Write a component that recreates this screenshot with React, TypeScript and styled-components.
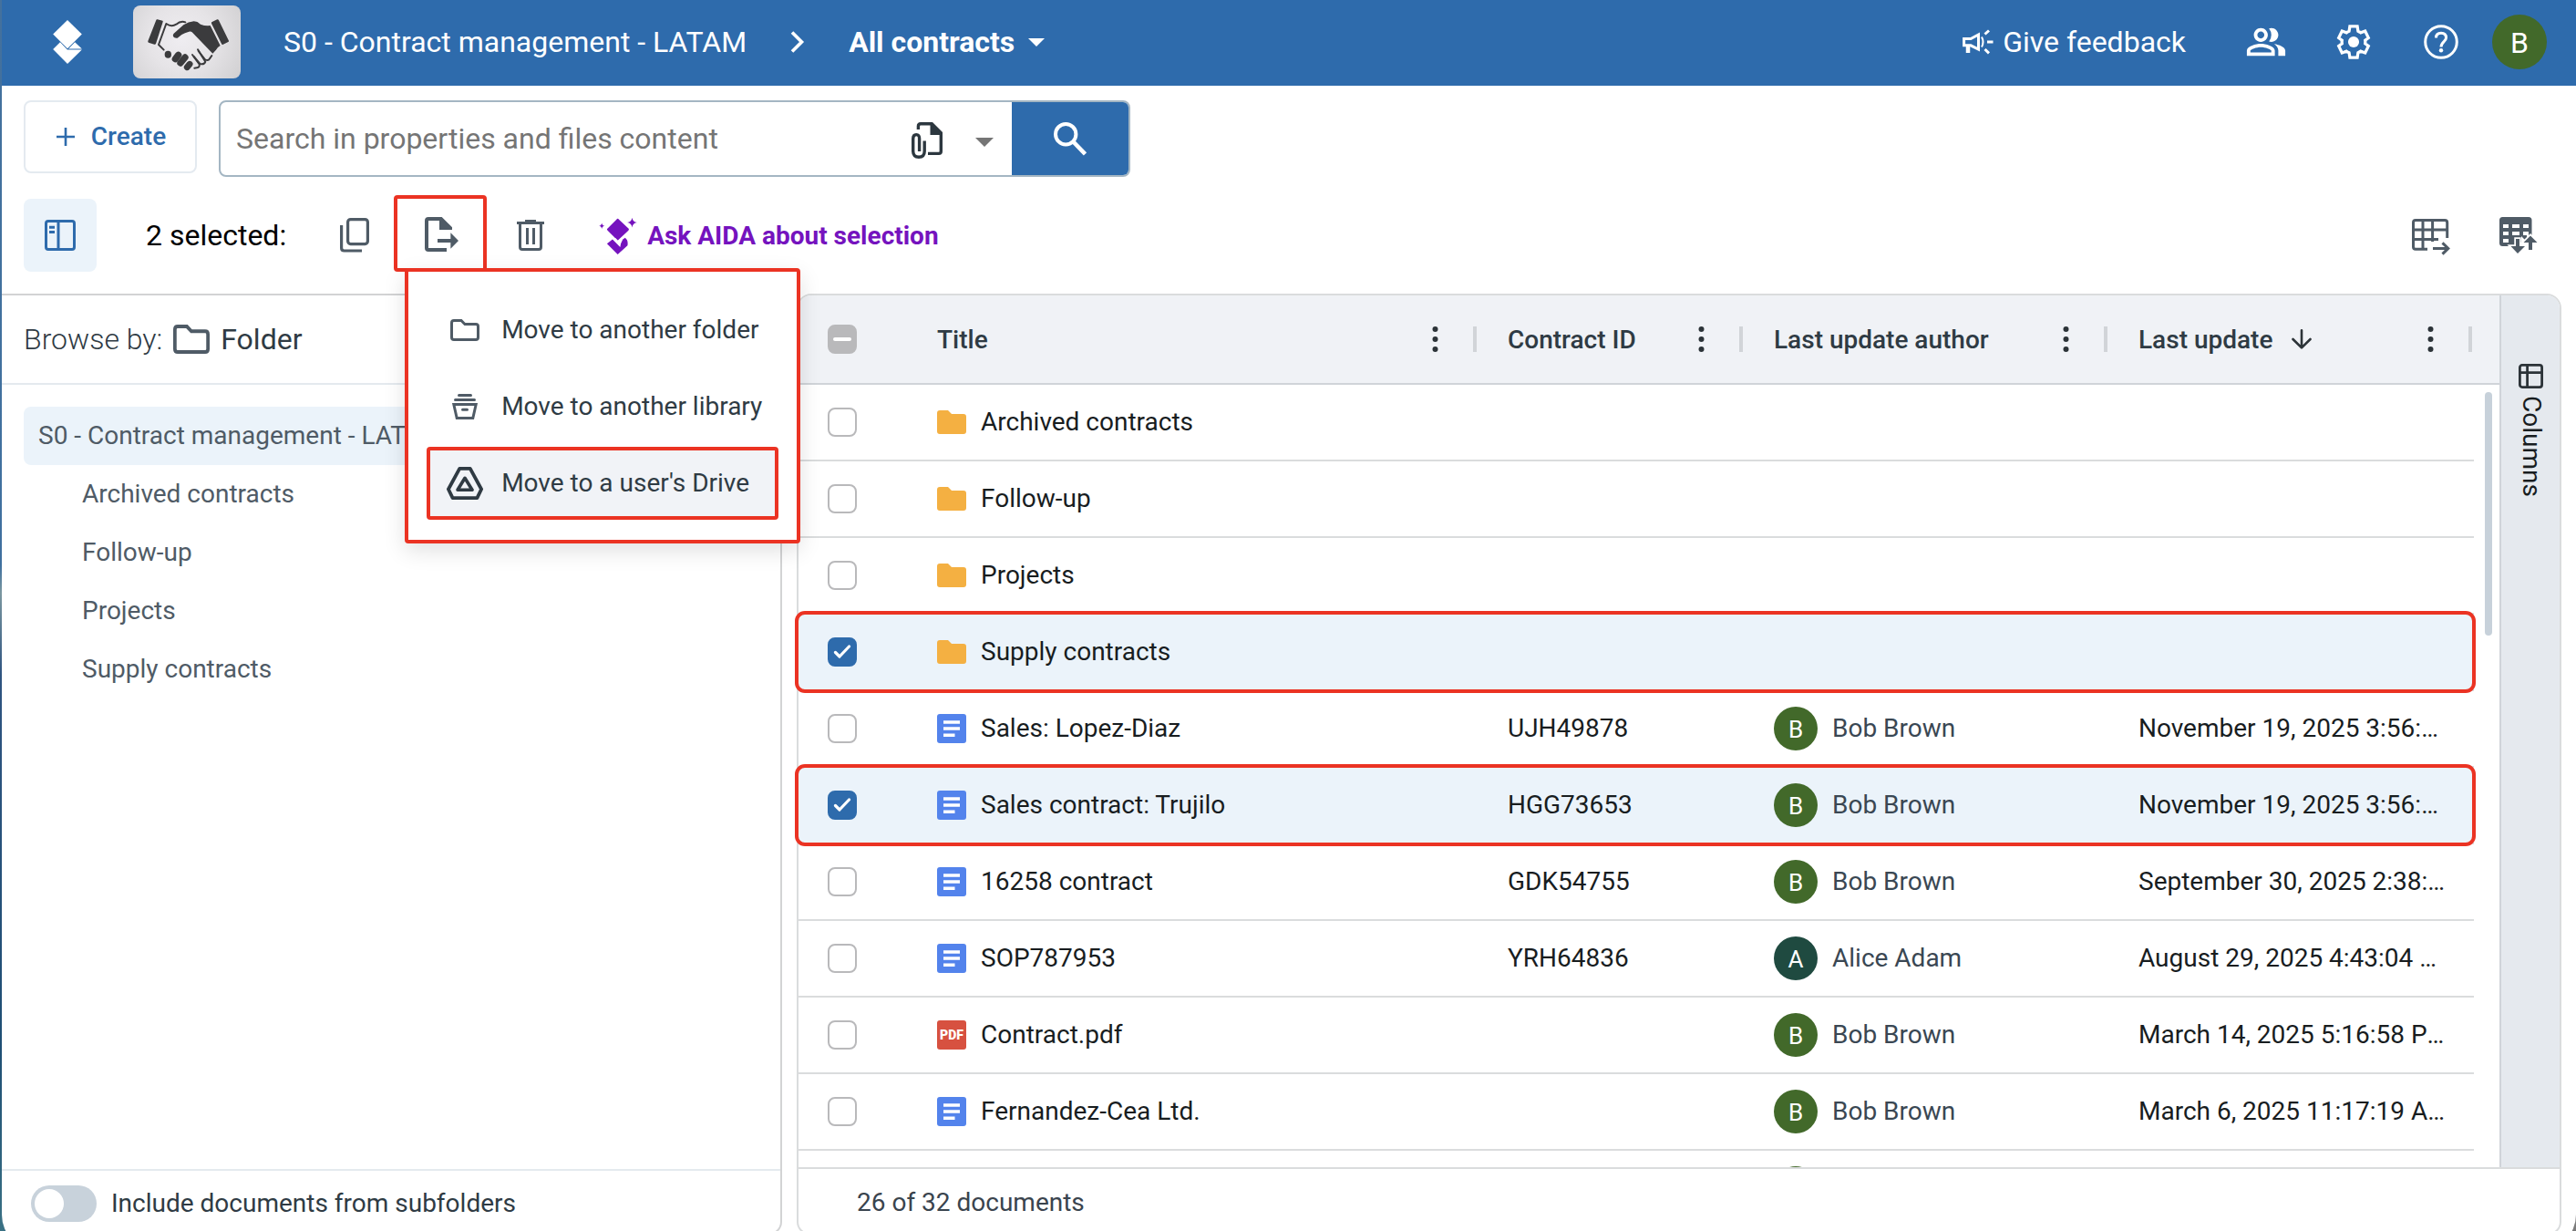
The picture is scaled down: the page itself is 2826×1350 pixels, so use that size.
import React from "react";
import styled, { createGlobalStyle, css } from "styled-components";
import { MdOutlinePeopleAlt } from "react-icons/md";

const BLUE = "#2e6bac";
const RED = "#eb3323";
const SLATE = "#4f5b66";
const INK = "#2f3b44";

const GlobalStyle = createGlobalStyle`
  *, *::before, *::after { box-sizing: border-box; }
  html, body { margin: 0; padding: 0; }
  body {
    width: 2826px;
    height: 1350px;
    overflow: hidden;
    font-family: Roboto, "Liberation Sans", sans-serif;
    font-size: 28px;
    line-height: 32px;
    background: #7c7c7c;
  }
  svg { display: block; flex: none; }
`;

const Backdrop = styled.div`
  height: 1350px;
  overflow: hidden;
  padding-left: 2px;
  background: linear-gradient(180deg, #44719d 0, #3f709f 620px, #7b97a0 650px, #2f5480 740px, #1f4f74 1150px, #3a7184 1350px) left / 1400px 100% no-repeat;
`;

const Window = styled.div`
  height: 1372px;
  display: flex;
  flex-direction: column;
  background: #fff;
  border-radius: 0 0 40px 40px;
`;

/* Header */

const Header = styled.header`
  height: 94px;
  flex: none;
  display: flex;
  align-items: center;
  padding: 0 32px 2px 56px;
  background: ${BLUE};
  color: #fff;
  font-size: 32px;
`;

const LibraryThumb = styled.div`
  width: 118px;
  height: 80px;
  margin: 0 47px 0 56px;
  border-radius: 8px;
  overflow: hidden;
  background: radial-gradient(circle at 45% 45%, #efedf1 0, #e6e4e7 45%, #d0cfd1 100%);
`;

const LibraryName = styled.span`
  margin-right: 48px;
`;

const ViewPicker = styled.div`
  display: flex;
  align-items: center;
  gap: 15px;
  margin-left: 48px;
  font-weight: 700;
`;

const HeaderActions = styled.div`
  margin-left: auto;
  display: flex;
  align-items: center;
`;

const Feedback = styled.div`
  display: flex;
  align-items: center;
  gap: 10px;
  margin-right: 65px;
`;

const PeopleButton = styled.div`
  margin-right: 54px;
`;

const SettingsButton = styled.div`
  margin-right: 58px;
`;

const HelpButton = styled.div`
  margin-right: 37px;
`;

const Avatar = styled.span<{ $size: number; $color: string }>`
  width: ${(p) => p.$size}px;
  height: ${(p) => p.$size}px;
  flex: none;
  display: flex;
  align-items: center;
  justify-content: center;
  border-radius: 50%;
  background: ${(p) => p.$color};
  color: #fff;
  font-size: ${(p) => (p.$size > 50 ? 32 : 26)}px;
  padding-top: 2px;
`;

/* Search row */

const SearchRow = styled.div`
  flex: none;
  display: flex;
  align-items: flex-start;
  gap: 24px;
  padding: 16px 24px 0;
`;

const CreateButton = styled.button`
  width: 190px;
  height: 80px;
  display: flex;
  align-items: center;
  justify-content: center;
  gap: 18px;
  padding: 0 0 0 2px;
  border: 2px solid #e4eaf0;
  border-radius: 8px;
  background: #fff;
  color: ${BLUE};
  font: 500 28px/32px Roboto, sans-serif;
`;

const SearchBox = styled.div`
  width: 1000px;
  height: 84px;
  display: flex;
  align-items: center;
  border: 2px solid #a4b6c3;
  border-radius: 8px;
  overflow: hidden;
`;

const Placeholder = styled.span`
  flex: 1;
  padding-left: 17px;
  font-size: 32px;
  color: #757575;
`;

const SearchOptions = styled.div`
  display: flex;
  align-items: center;
  gap: 36px;
  padding: 4px 20px 0 0;
`;

const OptionsCaret = styled.span`
  padding-top: 4px;
`;

const SearchButton = styled.div`
  width: 128px;
  height: 100%;
  display: flex;
  align-items: center;
  padding-left: 46px;
  background: ${BLUE};
`;

/* Toolbar */

const Toolbar = styled.div`
  height: 128px;
  flex: none;
  display: flex;
  align-items: center;
  padding: 0 42px 0 24px;
`;

const PanelToggle = styled.div`
  width: 80px;
  height: 80px;
  display: flex;
  align-items: center;
  justify-content: center;
  border-radius: 8px;
  background: #ebf3fa;
`;

const SelectionCount = styled.span`
  margin: 0 59px 0 54px;
  font-size: 32px;
  color: #000;
`;

const MoveAction = styled.div`
  position: relative;
  width: 102px;
  height: 84px;
  margin: -4px 33px 0 27px;
  display: flex;
  align-items: center;
  padding: 2px 0 0 30px;
  border: 4px solid ${RED};
  border-radius: 4px;
  z-index: 5;
`;

const MoveMenu = styled.div`
  position: absolute;
  left: 8px;
  top: 76px;
  width: 434px;
  height: 302px;
  display: flex;
  flex-direction: column;
  gap: 4px;
  padding: 24px 20px;
  border: 4px solid ${RED};
  border-radius: 4px;
  background: #fff;
  box-shadow: 0 8px 24px rgba(0, 0, 0, 0.12);
`;

const MenuItem = styled.div<{ $active?: boolean }>`
  position: relative;
  height: 80px;
  flex: none;
  display: flex;
  align-items: center;
  gap: 20px;
  padding-left: 22px;
  color: ${INK};
  white-space: nowrap;
  ${(p) =>
    p.$active &&
    css`
      background: #f1f3f7;
      box-shadow: inset 0 0 0 4px ${RED};
      border-radius: 4px;
    `}
`;

const MenuIcon = styled.span`
  width: 40px;
  display: flex;
  justify-content: center;
`;

const AskAida = styled.div`
  display: flex;
  align-items: center;
  gap: 11px;
  margin-left: 60px;
  padding-top: 1px;
  color: #7513be;
  font-weight: 700;
`;

const TableTools = styled.div`
  margin-left: auto;
  display: flex;
  align-items: center;
  gap: 54px;
`;

const ExportTool = styled.div`
  padding-top: 4px;
`;

/* Content */

const Content = styled.main`
  height: 1032px;
  flex: none;
  display: flex;
  gap: 16px;
  padding-right: 16px;
`;

const Sidebar = styled.aside`
  width: 856px;
  display: flex;
  flex-direction: column;
  border: 2px solid #d2d3d4;
  border-left: 0;
  border-radius: 0 16px 14px 0;
`;

const BrowseBy = styled.div`
  height: 98px;
  display: flex;
  align-items: center;
  gap: 12px;
  padding-left: 24px;
  border-bottom: 2px solid #e4e9ee;
  font-size: 32px;
  font-weight: 300;
  color: ${INK};
`;

const BrowseValue = styled.span`
  font-weight: 450;
`;

const Tree = styled.div`
  flex: 1;
  padding: 24px;
  color: ${SLATE};
`;

const TreeItem = styled.div<{ $root?: boolean }>`
  height: 64px;
  display: flex;
  align-items: center;
  padding-left: ${(p) => (p.$root ? 16 : 64)}px;
  border-radius: 8px;
  background: ${(p) => (p.$root ? "#ebf3fa" : "transparent")};
`;

const SidebarFooter = styled.div`
  height: 70px;
  display: flex;
  align-items: flex-start;
  gap: 16px;
  padding: 16px 0 0 32px;
  border-top: 2px solid #e4eaee;
  color: ${INK};
`;

const Switch = styled.span`
  width: 72px;
  height: 40px;
  padding: 4px;
  border-radius: 20px;
  background: #c8d2db;

  &::before {
    content: "";
    display: block;
    width: 32px;
    height: 32px;
    border-radius: 50%;
    background: #fff;
  }
`;

const SwitchLabel = styled.span`
  padding-top: 4px;
`;

const TablePanel = styled.section`
  width: 1936px;
  display: flex;
  flex-direction: column;
  border: 2px solid #dadcdd;
  border-radius: 16px 16px 14px 14px;
`;

const TableBody = styled.div`
  height: 958px;
  flex: none;
  display: flex;
  border-bottom: 2px solid #dadcdd;
`;

const Grid = styled.div`
  width: 1866px;
  height: 956px;
  display: flex;
  flex-direction: column;
`;

const HeadRow = styled.div`
  height: 98px;
  flex: none;
  display: grid;
  grid-template-columns: 116px 628px 292px 400px 400px;
  border-bottom: 2px solid #d0d4d9;
  border-radius: 14px 0 0 0;
  background: #f0f2f6;
  color: ${INK};
  font-weight: 500;
`;

const HeadCell = styled.div<{ $indent: number }>`
  display: flex;
  align-items: center;
  padding-left: ${(p) => p.$indent}px;
`;

const HeadLabel = styled.span`
  padding-top: 2px;
`;

const SortArrow = styled.span`
  margin-left: 21px;
`;

const HeadMenu = styled.span`
  display: flex;
  align-items: center;
  gap: 38px;
  margin-left: auto;

  &::after {
    content: "";
    width: 4px;
    height: 28px;
    background: #d1d4d8;
  }
`;

const GridScroll = styled.div`
  height: 858px;
  display: flex;
  justify-content: space-between;
`;

const Rows = styled.div`
  width: 1838px;
  overflow: visible clip;
  color: #181d1f;
`;

const Row = styled.div<{ $selected?: boolean }>`
  position: relative;
  height: 84px;
  display: grid;
  grid-template-columns: 116px 628px 292px 400px 400px;
  border-bottom: 2px solid #dadcdd;
  ${(p) =>
    p.$selected &&
    css`
      background: #ebf3fa;
      &::after {
        content: "";
        position: absolute;
        inset: -4px -2px -4px -4px;
        border: 4px solid ${RED};
        border-radius: 11px;
        z-index: 1;
      }
    `}
`;

const Cell = styled.div<{ $indent: number; $gap?: number }>`
  display: flex;
  align-items: center;
  gap: ${(p) => p.$gap ?? 0}px;
  padding-left: ${(p) => p.$indent}px;
  white-space: nowrap;
`;

const Author = styled.span`
  color: #3a4753;
`;

const Updated = styled.span`
  white-space: pre;

  &::after {
    content: "…";
    display: inline-block;
  }
`;

const Check = styled.span<{ $state?: "on" | "mixed" }>`
  width: 32px;
  height: 32px;
  display: flex;
  align-items: center;
  justify-content: center;
  border-radius: 8px;
  border: 2px solid ${(p) => (p.$state === "on" ? BLUE : "#b9b9bb")};
  background: ${(p) => (p.$state === "on" ? BLUE : p.$state === "mixed" ? "#b9b9bb" : "#fff")};
`;

const PdfBadge = styled.span`
  width: 32px;
  height: 32px;
  display: flex;
  align-items: center;
  justify-content: center;
  border-radius: 3px;
  background: #d75140;
  color: #fff;
  font-size: 14px;
  font-weight: 900;
`;

const ScrollThumb = styled.div`
  width: 8px;
  height: 267px;
  margin: 8px 8px 0 0;
  border-radius: 4px;
  background: #c7d1da;
`;

const SideBar = styled.div`
  width: 66px;
  height: 956px;
  display: flex;
  flex-direction: column;
  align-items: center;
  gap: 8px;
  padding-top: 75px;
  border-left: 2px solid #d0d4d9;
  border-radius: 0 14px 0 0;
  background: #e5e9ee;
  color: #181d1f;
`;

const SideLabel = styled.span`
  writing-mode: vertical-rl;
  padding-left: 2px;
`;

const TableFooter = styled.div`
  padding: 21px 0 0 64px;
  color: #3a444e;
`;

/* Icons */

const Logo = () => (
  <svg width="32" height="48" viewBox="54 66 95 144" fill="#fff">
    <path d="M101.5 66 149 112.5 101.5 160 54 112.5Z" />
    <path d="M54 162 77.5 139 101 163.5H149L101.5 210Z" />
    <path d="M126 139 149 160.5H105Z" />
  </svg>
);

const Handshake = () => (
  <svg width="118" height="80" viewBox="318 18 354 240" fill="#3b3b3d" stroke="none">
    <path d="M398 64 415 68Q417 69 416 72L393 144Q391 147 388 146L369 140Q366 139 367 135L394 66Q395 63 398 64Z" />
    <path d="M578 72 595 64Q598 63 600 67L633 134Q634 137 631 138L613 147Q610 147 609 144L576 77Q575 73 578 72Z" />
    <path d="M452 110 484 82Q500 71 518 70 530 70 540 80 556 86 572 84L605 150Q596 155 591 164L580 176 512 106Q508 102 502 104 488 108 478 114L464 125Q454 127 450 120 448 114 452 110Z" />
    <g fill="none" stroke="#3b3b3d" strokeWidth="6" strokeLinecap="round" strokeLinejoin="round">
      <path d="M419 164 402 147 427 78Q444 90 460 80 474 68 490 73" />
      <path d="M513 180 536 211Q538 222 528 223L520 224" />
      <path d="M518 186 538 210Q552 214 556 203L531 163" />
      <path d="M533 168 555 196Q566 201 570 193L577 183" />
    </g>
    <ellipse cx="433" cy="179" rx="11" ry="12" />
    <g stroke="#3b3b3d" strokeLinecap="round">
      <path d="M457 194 467 181" strokeWidth="22" />
      <path d="M474 207 489 189" strokeWidth="22" />
      <path d="M496 221 504 211" strokeWidth="21" />
    </g>
  </svg>
);

const Caret = ({ color, w, h }: { color: string; w: number; h: number }) => (
  <svg width={w} height={h} viewBox="0 0 20 10" preserveAspectRatio="none" fill={color}>
    <path d="M0 0H20L10 10Z" />
  </svg>
);

const ChevronIcon = () => (
  <svg width="16" height="24" viewBox="0 0 16 24" fill="none" stroke="#fff" strokeWidth="3.6">
    <path d="M2 1.5 12.5 12 2 22.5" />
  </svg>
);

const MegaphoneIcon = () => (
  <svg width="34" height="28" viewBox="0 0 34 28" fill="none" stroke="#fff" strokeWidth="3">
    <path d="M1.6 10.5H9L17.5 6V22L9 17.8H1.6Z" />
    <path d="M6 18V26" strokeWidth="4.5" />
    <path d="M21 8.5Q24 14 21 19.5" strokeWidth="2" />
    <path d="M24.5 5.5 29 1.5M27 14H33.5M24.5 22 29 26.3" />
  </svg>
);

const GearIcon = () => (
  <svg width="38" height="38" viewBox="2 2 20 20" fill="none" stroke="#fff" strokeWidth="1.9">
    <g transform="translate(12 12) scale(0.9) translate(-12 -12)">
      <path d="M19.43 12.98c.04-.32.07-.64.07-.98 0-.34-.03-.66-.07-.98l2.11-1.65-2.12-4.35-2.86 1.03c-.52-.4-1.08-.73-1.69-.98L14.4 2H9.6l-.47 3.07c-.61.25-1.17.59-1.69.98l-2.86-1.03-2.12 4.35 2.11 1.65c-.04.32-.07.65-.07.98 0 .33.03.66.07.98l-2.11 1.65 2.12 4.35 2.86-1.03c.52.4 1.08.73 1.69.98L9.6 22h4.8l.47-3.07c.61-.25 1.17-.59 1.69-.98l2.86 1.03 2.12-4.35Z" />
    </g>
    <circle cx="12" cy="12" r="3.2" fill="#fff" stroke="none" />
  </svg>
);

const HelpIcon = () => (
  <svg width="38" height="38" viewBox="0 0 38 38" fill="none" stroke="#fff" strokeWidth="3">
    <circle cx="19" cy="19" r="17.3" />
    <path d="M13.5 14.5Q13.5 9.3 19 9.3T24.5 14.5C24.5 18.5 19 18.8 19 24.5" />
    <circle cx="19" cy="28.3" r="2.2" fill="#fff" stroke="none" />
  </svg>
);

const PlusIcon = () => (
  <svg width="20" height="20" viewBox="0 0 20 20" stroke={BLUE} strokeWidth="2.6">
    <path d="M10 0V20M0 10H20" />
  </svg>
);

const AttachIcon = () => (
  <svg width="34" height="40" viewBox="0 0 34 40" fill="none" stroke="#2c373f" strokeWidth="3.4">
    <path d="M7.4 8V4.5Q7.4 1.7 10 1.7H22" />
    <path d="M32.3 13V32Q32.3 34.4 30 34.4H18" />
    <path d="M20.5 0H23L34 11V14H20.5Z" fill="#2c373f" stroke="none" />
    <path d="M14.2 20.5V32Q14.2 38.2 8 38.2T1.7 32V18Q1.7 13.6 5.2 13.6T8.6 18V32" />
  </svg>
);

const SearchIcon = () => (
  <svg width="36" height="37" viewBox="0 0 36 37" fill="none" stroke="#fff" strokeWidth="4">
    <circle cx="13.2" cy="13.2" r="11.2" />
    <path d="M21.5 21.5 34.5 35" strokeWidth="4.6" />
  </svg>
);

const PanelIcon = () => (
  <svg width="34" height="34" viewBox="0 0 34 34" fill="none" stroke={BLUE} strokeWidth="3">
    <rect x="1.5" y="1.5" width="31" height="31" rx="2.5" />
    <path d="M15 2V32M5 8.3H11M5 13.5H11" />
  </svg>
);

const CopyIcon = () => (
  <svg width="32" height="38" viewBox="0 0 32 38" fill="none" stroke={SLATE} strokeWidth="3.2">
    <rect x="8.6" y="1.6" width="21.8" height="27" rx="3" />
    <path d="M1.6 8V33Q1.6 36 4.6 36H24" />
  </svg>
);

const ExportIcon = () => (
  <svg width="37" height="38" viewBox="108 114 111 114" fill={SLATE}>
    <path d="M180 222H120Q114 222 114 216V126Q114 120 120 120H158" fill="none" stroke={SLATE} strokeWidth="12" />
    <path d="M156 114H164L198 148V156H156Z" />
    <path d="M150 186H193V166L219 192 193 218V198H150Z" />
  </svg>
);

const TrashIcon = () => (
  <svg width="30" height="34" viewBox="0 0 30 34" fill="none" stroke={SLATE} strokeWidth="3">
    <path d="M0 3.5H30M9 1.5H21M3.5 4V30Q3.5 32.5 6 32.5H24Q26.5 32.5 26.5 30V4" />
    <path d="M11.5 9V27M18.5 9V27" />
  </svg>
);

const AidaIcon = () => (
  <svg width="42" height="40" viewBox="683 116 124 119" fill="#7513be">
    <path d="M740 121Q744 116 748 121L779 150Q782 153 779 157L744 190 711 157Q707 153 711 150Z" />
    <path d="M709 200 727 186 741 200 752 211 756 190 768 181Q779 189 776 206L744 235Z" />
    <path d="M735 183 751 200 758 187" fill="none" stroke="#fff" strokeWidth="4" />
    <path d="M791 115Q793 129 807 131 793 133 791 147 789 133 775 131 789 129 791 115ZM692 132Q693 141 702 142 693 143 692 152 691 143 682 142 691 141 692 132Z" />
  </svg>
);

const TableExportIcon = () => (
  <svg width="42" height="40" viewBox="0 0 42 40" fill="none" stroke={SLATE} strokeWidth="3">
    <path d="M17 33.2H4Q1.5 33.2 1.5 31V4Q1.5 1.5 4 1.5H36Q38.7 1.5 38.7 4V21" />
    <path d="M12 2V33M22.6 2V25M2 12H38.5M2 22.6H29" />
    <path d="M23 32.4H40M33.5 26.3 39.8 32.4 33.5 38.6" />
  </svg>
);

const TableTransferIcon = () => (
  <svg width="42" height="40" viewBox="0 0 42 40" fill={SLATE}>
    <path d="M3.5 0H32Q35.5 0 35.5 3.5V20H30V27L24 21V31H13L9 32H3.5Q0 32 0 28.5V3.5Q0 0 3.5 0Z" />
    <path d="M4 8H10V12H4ZM14 8H22V12H14ZM26 8H32V12H26ZM4 16H10V20H4ZM14 16H22V20H14ZM26 16H32V20H26ZM4 24H10V28H4Z" fill="#fff" />
    <path d="M18 24H22V32H28L20 40 12.5 32H18ZM32 36V28H26.5L34 20.5 41.5 28H36V36Z" stroke="#fff" strokeWidth="3.5" paintOrder="stroke" />
  </svg>
);

const FolderOutline = ({ w, h }: { w: number; h: number }) => (
  <svg width={w} height={h} viewBox="0 0 32 24" preserveAspectRatio="none" fill="none" stroke={SLATE} strokeWidth="3">
    <path d="M4 1.5H12L16 5.5H28Q30.5 5.5 30.5 8V20Q30.5 22.5 28 22.5H4Q1.5 22.5 1.5 20V4Q1.5 1.5 4 1.5Z" />
  </svg>
);

const LibraryIcon = () => (
  <svg width="28" height="28" viewBox="0 0 28 28" fill="none" stroke={SLATE} strokeWidth="3">
    <path d="M7.5 1.5H20.5M3.5 6.5H24.5M11.5 17.3H16.5" strokeLinecap="round" />
    <path d="M1.8 11.5H26.2L22.8 26.5H5.2Z" />
  </svg>
);

const DriveIcon = () => (
  <svg width="40" height="36" viewBox="0 0 40 36" fill="none" stroke="#2f3a43" strokeLinejoin="round">
    <path d="M14.2 1.9H25.8L38.1 24.5 33.4 34.1H6.6L1.9 24.5Z" strokeWidth="3.8" />
    <path d="M20 12.3 28 25.3H12Z" strokeWidth="3.6" />
  </svg>
);

const FolderIcon = () => (
  <svg width="32" height="26" viewBox="0 0 32 26" fill="#f4b042">
    <path d="M3 0H12L16 4H29Q32 4 32 7V23Q32 26 29 26H3Q0 26 0 23V3Q0 0 3 0Z" />
  </svg>
);

const DocIcon = () => (
  <svg width="32" height="32" viewBox="0 0 32 32">
    <rect width="32" height="32" rx="3" fill="#5383ec" />
    <path d="M7 9H25M7 16H25M7 23.2H19.5" stroke="#fff" strokeWidth="3.4" />
  </svg>
);

const TickIcon = () => (
  <svg width="20" height="16" viewBox="0 0 20 16" fill="none" stroke="#fff" strokeWidth="3.2" strokeLinecap="round" strokeLinejoin="round">
    <path d="M2.5 8.5 7 13 17.5 2" />
  </svg>
);

const DashIcon = () => (
  <svg width="20" height="4" viewBox="0 0 20 4">
    <rect width="20" height="4" rx="2" fill="#fff" />
  </svg>
);

const DotsIcon = () => (
  <svg width="7" height="28" viewBox="0 0 7 28" fill="#2c3338">
    <circle cx="3.5" cy="3" r="3" />
    <circle cx="3.5" cy="14" r="3" />
    <circle cx="3.5" cy="25" r="3" />
  </svg>
);

const DownArrowIcon = () => (
  <svg width="22" height="22" viewBox="0 0 22 22" fill="none" stroke="#2c3338" strokeWidth="2.6" strokeLinecap="round" strokeLinejoin="round">
    <path d="M11 1.3V20M1.5 11 11 20.4 20.5 11" />
  </svg>
);

const ColumnsIcon = () => (
  <svg width="27" height="27" viewBox="0 0 27 27" fill="none" stroke="#2c3338" strokeWidth="2.8">
    <rect x="1.4" y="1.4" width="24.2" height="24.2" rx="2.5" />
    <path d="M1 9.7H26M9.6 1V26" />
  </svg>
);

/* Data */

type Kind = "folder" | "doc" | "pdf";

interface Entry {
  kind: Kind;
  title: string;
  id?: string;
  author?: string;
  updated?: string;
  selected?: boolean;
}

const ENTRIES: Entry[] = [
  { kind: "folder", title: "Archived contracts" },
  { kind: "folder", title: "Follow-up" },
  { kind: "folder", title: "Projects" },
  { kind: "folder", title: "Supply contracts", selected: true },
  { kind: "doc", title: "Sales: Lopez-Diaz", id: "UJH49878", author: "Bob Brown", updated: "November 19, 2025 3:56:" },
  { kind: "doc", title: "Sales contract: Trujilo", id: "HGG73653", author: "Bob Brown", updated: "November 19, 2025 3:56:", selected: true },
  { kind: "doc", title: "16258 contract", id: "GDK54755", author: "Bob Brown", updated: "September 30, 2025 2:38:" },
  { kind: "doc", title: "SOP787953", id: "YRH64836", author: "Alice Adam", updated: "August 29, 2025 4:43:04 " },
  { kind: "pdf", title: "Contract.pdf", author: "Bob Brown", updated: "March 14, 2025 5:16:58 P" },
  { kind: "doc", title: "Fernandez-Cea Ltd.", author: "Bob Brown", updated: "March 6, 2025 11:17:19 A" },
];

const TREE = ["Archived contracts", "Follow-up", "Projects", "Supply contracts"];

const avatarColor = (name: string) => (name.startsWith("A") ? "#1f4a40" : "#42692a");

const KindIcon = ({ kind }: { kind: Kind }) => {
  if (kind === "folder") return <FolderIcon />;
  if (kind === "pdf") return <PdfBadge>PDF</PdfBadge>;
  return <DocIcon />;
};

const EntryRow = ({ entry }: { entry: Entry }) => (
  <Row $selected={entry.selected}>
    <Cell $indent={32}>
      <Check $state={entry.selected ? "on" : undefined}>{entry.selected && <TickIcon />}</Check>
    </Cell>
    <Cell $indent={36} $gap={16}>
      <KindIcon kind={entry.kind} />
      {entry.title}
    </Cell>
    <Cell $indent={34}>{entry.id}</Cell>
    <Cell $indent={34} $gap={16}>
      {entry.author && (
        <>
          <Avatar $size={48} $color={avatarColor(entry.author)}>
            {entry.author[0]}
          </Avatar>
          <Author>{entry.author}</Author>
        </>
      )}
    </Cell>
    <Cell $indent={34}>{entry.updated && <Updated>{entry.updated}</Updated>}</Cell>
  </Row>
);

export default function App() {
  return (
    <>
      <GlobalStyle />
      <Backdrop>
        <Window>
          <Header>
            <Logo />
            <LibraryThumb>
              <Handshake />
            </LibraryThumb>
            <LibraryName>S0 - Contract management - LATAM</LibraryName>
            <ChevronIcon />
            <ViewPicker>
              All contracts
              <Caret color="#fff" w={18} h={9} />
            </ViewPicker>
            <HeaderActions>
              <Feedback>
                <MegaphoneIcon />
                Give feedback
              </Feedback>
              <PeopleButton>
                <MdOutlinePeopleAlt size={46} />
              </PeopleButton>
              <SettingsButton>
                <GearIcon />
              </SettingsButton>
              <HelpButton>
                <HelpIcon />
              </HelpButton>
              <Avatar $size={60} $color="#42692a">
                B
              </Avatar>
            </HeaderActions>
          </Header>

          <SearchRow>
            <CreateButton>
              <PlusIcon />
              Create
            </CreateButton>
            <SearchBox>
              <Placeholder>Search in properties and files content</Placeholder>
              <SearchOptions>
                <AttachIcon />
                <OptionsCaret>
                  <Caret color="#757575" w={20} h={10} />
                </OptionsCaret>
              </SearchOptions>
              <SearchButton>
                <SearchIcon />
              </SearchButton>
            </SearchBox>
          </SearchRow>

          <Toolbar>
            <PanelToggle>
              <PanelIcon />
            </PanelToggle>
            <SelectionCount>2 selected:</SelectionCount>
            <CopyIcon />
            <MoveAction>
              <ExportIcon />
              <MoveMenu>
                <MenuItem>
                  <MenuIcon>
                    <FolderOutline w={32} h={24} />
                  </MenuIcon>
                  Move to another folder
                </MenuItem>
                <MenuItem>
                  <MenuIcon>
                    <LibraryIcon />
                  </MenuIcon>
                  Move to another library
                </MenuItem>
                <MenuItem $active>
                  <MenuIcon>
                    <DriveIcon />
                  </MenuIcon>
                  Move to a user's Drive
                </MenuItem>
              </MoveMenu>
            </MoveAction>
            <TrashIcon />
            <AskAida>
              <AidaIcon />
              Ask AIDA about selection
            </AskAida>
            <TableTools>
              <ExportTool>
                <TableExportIcon />
              </ExportTool>
              <TableTransferIcon />
            </TableTools>
          </Toolbar>

          <Content>
            <Sidebar>
              <BrowseBy>
                Browse by:
                <FolderOutline w={40} h={32} />
                <BrowseValue>Folder</BrowseValue>
              </BrowseBy>
              <Tree>
                <TreeItem $root>S0 - Contract management - LATAM</TreeItem>
                {TREE.map((name) => (
                  <TreeItem key={name}>{name}</TreeItem>
                ))}
              </Tree>
              <SidebarFooter>
                <Switch />
                <SwitchLabel>Include documents from subfolders</SwitchLabel>
              </SidebarFooter>
            </Sidebar>

            <TablePanel>
              <TableBody>
                <Grid>
                  <HeadRow>
                    <HeadCell $indent={32}>
                      <Check $state="mixed">
                        <DashIcon />
                      </Check>
                    </HeadCell>
                    <HeadCell $indent={36}>
                      <HeadLabel>Title</HeadLabel>
                      <HeadMenu>
                        <DotsIcon />
                      </HeadMenu>
                    </HeadCell>
                    <HeadCell $indent={34}>
                      <HeadLabel>Contract ID</HeadLabel>
                      <HeadMenu>
                        <DotsIcon />
                      </HeadMenu>
                    </HeadCell>
                    <HeadCell $indent={34}>
                      <HeadLabel>Last update author</HeadLabel>
                      <HeadMenu>
                        <DotsIcon />
                      </HeadMenu>
                    </HeadCell>
                    <HeadCell $indent={34}>
                      <HeadLabel>Last update</HeadLabel>
                      <SortArrow>
                        <DownArrowIcon />
                      </SortArrow>
                      <HeadMenu>
                        <DotsIcon />
                      </HeadMenu>
                    </HeadCell>
                  </HeadRow>
                  <GridScroll>
                    <Rows>
                      {ENTRIES.map((entry) => (
                        <EntryRow key={entry.title} entry={entry} />
                      ))}
                      <Row>
                        <Cell $indent={0} />
                        <Cell $indent={0} />
                        <Cell $indent={0} />
                        <Cell $indent={34}>
                          <Avatar $size={48} $color="#42692a" />
                        </Cell>
                      </Row>
                    </Rows>
                    <ScrollThumb />
                  </GridScroll>
                </Grid>
                <SideBar>
                  <ColumnsIcon />
                  <SideLabel>Columns</SideLabel>
                </SideBar>
              </TableBody>
              <TableFooter>26 of 32 documents</TableFooter>
            </TablePanel>
          </Content>
        </Window>
      </Backdrop>
    </>
  );
}
